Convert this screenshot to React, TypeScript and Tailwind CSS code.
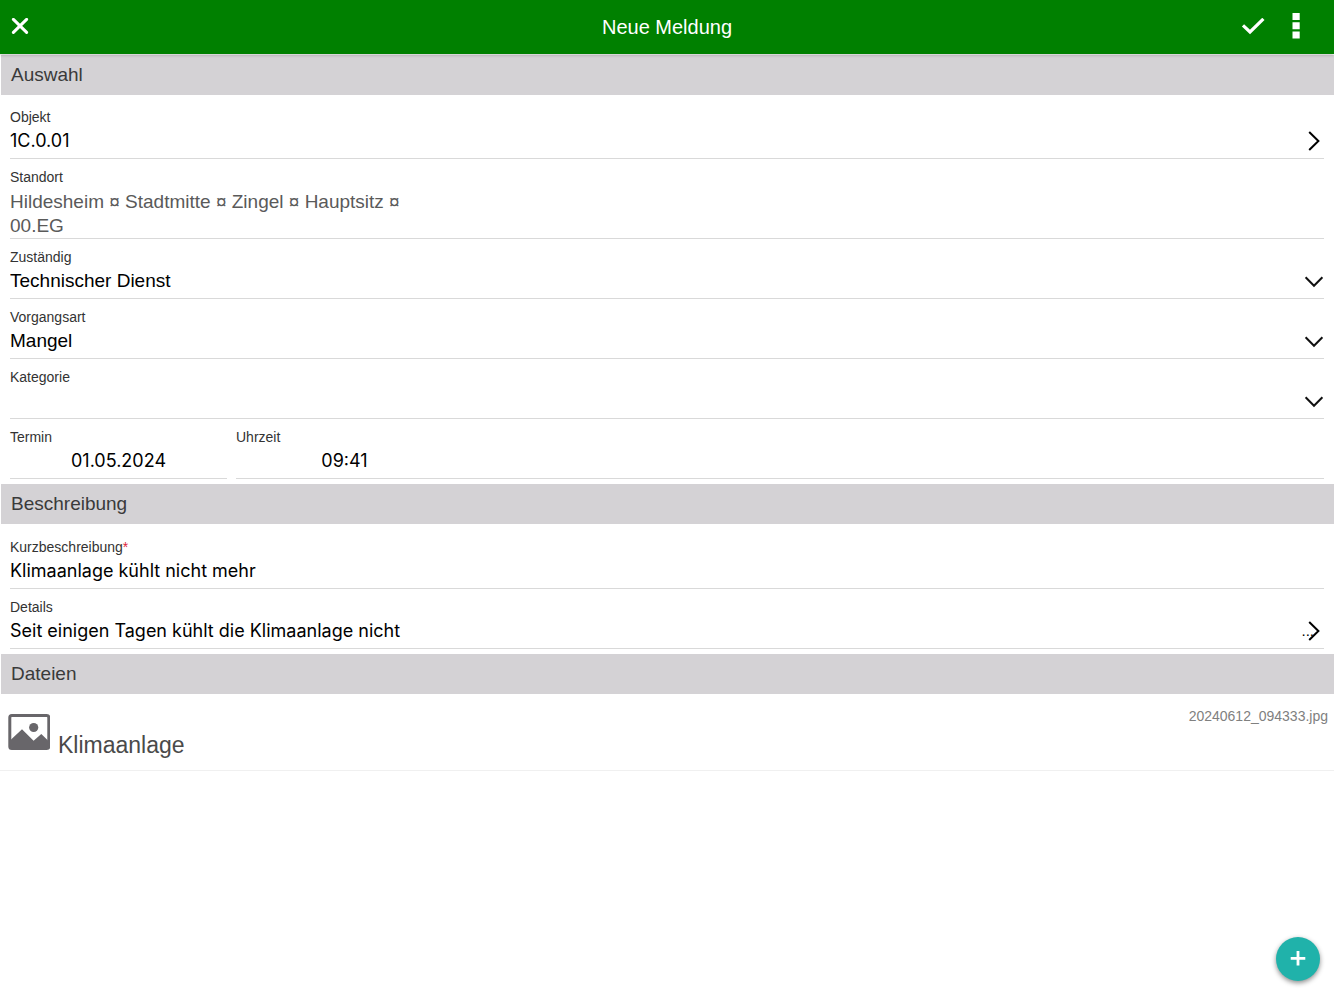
import type { ReactNode } from "react";

const labelClass = "block text-[14px] leading-4 text-[#333]";
const inputClass =
  "block h-6 w-full appearance-none bg-transparent p-0 font-[Inter,sans-serif] text-[18px] leading-6 text-black outline-none";
const selectClass =
  "block h-6 w-full appearance-none bg-transparent p-0 text-[19px] leading-6 text-black outline-none";

function SectionTitle({ children }: { children: ReactNode }) {
  return (
    <h2 className="ml-px h-10 bg-[#d4d2d5] pl-[10px] text-[19px] leading-10 text-[#3a3a3a]">
      {children}
    </h2>
  );
}

function Field({
  id,
  label,
  required,
  className = "",
  children,
}: {
  id: string;
  label: string;
  required?: boolean;
  className?: string;
  children: ReactNode;
}) {
  return (
    <div className={`border-b border-[#d9d9d9] pt-[10px] pb-[5px] ${className}`}>
      <label htmlFor={id} className={labelClass}>
        {label}
        {required && <span className="text-[#e0243c]">*</span>}
      </label>
      <div className="relative mt-1">{children}</div>
    </div>
  );
}

function ChevronDown() {
  return (
    <svg
      className="pointer-events-none absolute top-[7px] right-0"
      width="20"
      height="12"
      viewBox="0 0 20 12"
      fill="none"
      stroke="#111"
      strokeWidth="2"
      aria-hidden="true"
    >
      <path d="M1.6 1.2 10 9.8 18.4 1.2" />
    </svg>
  );
}

function ArrowButton({ label }: { label: string }) {
  return (
    <button type="button" aria-label={label} className="absolute top-[2px] right-1">
      <svg width="12" height="20" viewBox="0 0 12 20" fill="none" stroke="#000" strokeWidth="2" className="block">
        <path d="M1.2 1 10.4 10 1.2 19" />
      </svg>
    </button>
  );
}

function SelectField({ id, label, options }: { id: string; label: string; options: string[] }) {
  return (
    <Field id={id} label={label}>
      <select id={id} className={selectClass} defaultValue={options[0]}>
        {options.map((option) => (
          <option key={option}>{option}</option>
        ))}
      </select>
      <ChevronDown />
    </Field>
  );
}

export default function App() {
  return (
    <div className="flex min-h-screen flex-col bg-white font-['Liberation_Sans',Arial,sans-serif]">
      <header className="relative z-10 grid h-[54px] grid-cols-[1fr_auto_1fr] items-center bg-[#008000] text-white shadow-[0_1px_3px_rgba(0,0,0,0.25)]">
        <button type="button" aria-label="Schließen" className="ml-[11px] justify-self-start">
          <svg width="18" height="18" viewBox="0 0 18 18" stroke="#fff" strokeWidth="3" strokeLinecap="round" className="block">
            <path d="M2.4 1.4 15.6 14.4M15.6 1.4 2.4 14.4" />
          </svg>
        </button>
        <h1 className="text-[20px] leading-6">Neue Meldung</h1>
        <div className="mr-[34px] flex items-center gap-[27px] justify-self-end">
          <button type="button" aria-label="Speichern">
            <svg width="24" height="18" viewBox="0 0 24 18" fill="none" stroke="#fff" strokeWidth="3.2" className="block">
              <path d="M2 7.4 9 14 22.4 0.9" />
            </svg>
          </button>
          <button type="button" aria-label="Weitere Optionen">
            <svg width="8" height="28" viewBox="0 0 8 28" fill="#fff" className="block">
              <path d="M0.5 0h7.2v7H0.5zM0.5 9.2h7.2v7H0.5zM0.5 18.6h7.2v7H0.5z" />
            </svg>
          </button>
        </div>
      </header>

      <main className="pt-px">
        <SectionTitle>Auswahl</SectionTitle>
        <div className="px-[10px] pt-1 pb-[5px]">
          <Field id="objekt" label="Objekt">
            <input id="objekt" className={inputClass} defaultValue="1C.0.01" />
            <ArrowButton label="Objekt auswählen" />
          </Field>
          <div className="border-b border-[#d9d9d9] pt-[10px]">
            <span className={labelClass}>Standort</span>
            <p className="mt-[5px] max-w-[400px] text-[19px] leading-6 text-[#5a5a5a]">
              Hildesheim ¤ Stadtmitte ¤ Zingel ¤ Hauptsitz ¤ 00.EG
            </p>
          </div>
          <SelectField id="zustaendig" label="Zuständig" options={["Technischer Dienst"]} />
          <SelectField id="vorgangsart" label="Vorgangsart" options={["Mangel"]} />
          <SelectField id="kategorie" label="Kategorie" options={[""]} />
          <div className="flex gap-[9px]">
            <Field id="termin" label="Termin" className="w-[217px]">
              <input id="termin" className={`${inputClass} text-center`} defaultValue="01.05.2024" />
            </Field>
            <Field id="uhrzeit" label="Uhrzeit" className="flex-1">
              <div className="w-[217px]">
                <input id="uhrzeit" className={`${inputClass} text-center`} defaultValue="09:41" />
              </div>
            </Field>
          </div>
        </div>

        <SectionTitle>Beschreibung</SectionTitle>
        <div className="px-[10px] py-[5px]">
          <Field id="kurz" label="Kurzbeschreibung" required>
            <input id="kurz" className={inputClass} defaultValue="Klimaanlage kühlt nicht mehr" />
          </Field>
          <Field id="details" label="Details">
            <input id="details" className={inputClass} defaultValue="Seit einigen Tagen kühlt die Klimaanlage nicht" />
            <span className="pointer-events-none absolute top-0 right-[10px] text-[15px] leading-6">...</span>
            <ArrowButton label="Details bearbeiten" />
          </Field>
        </div>

        <SectionTitle>Dateien</SectionTitle>
        <ul>
          <li className="flex h-[77px] items-start border-b border-[#f0f0f0] pr-[6px] pl-2">
            <svg width="42" height="36" viewBox="0 0 42 36" className="mt-5 block shrink-0" aria-hidden="true">
              <rect x="1.8" y="1.5" width="39" height="33" rx="2" fill="#fff" stroke="#68666a" strokeWidth="3" />
              <circle cx="25.7" cy="13.5" r="4.6" fill="#68666a" />
              <path d="M2 26.5 14 15.3 25.6 26.8 33.3 20 40 26.4V34H2z" fill="#68666a" />
            </svg>
            <a href="#klimaanlage" className="mt-[35px] ml-2 text-[23px] leading-8 text-[#4a4a4a]">
              Klimaanlage
            </a>
            <span className="mt-[14px] ml-auto text-[14px] leading-4 text-[#808080]">20240612_094333.jpg</span>
          </li>
        </ul>
      </main>

      <button
        type="button"
        aria-label="Hinzufügen"
        className="fixed right-[14px] bottom-[19px] flex size-11 items-center justify-center rounded-full bg-[#20b2aa] shadow-[0_2px_5px_rgba(0,0,0,0.45)]"
      >
        <svg width="16" height="16" viewBox="0 0 16 16" stroke="#fff" strokeWidth="2.8" aria-hidden="true">
          <path d="M8 0V14.6M0.7 7.3H15.3" />
        </svg>
      </button>
    </div>
  );
}
